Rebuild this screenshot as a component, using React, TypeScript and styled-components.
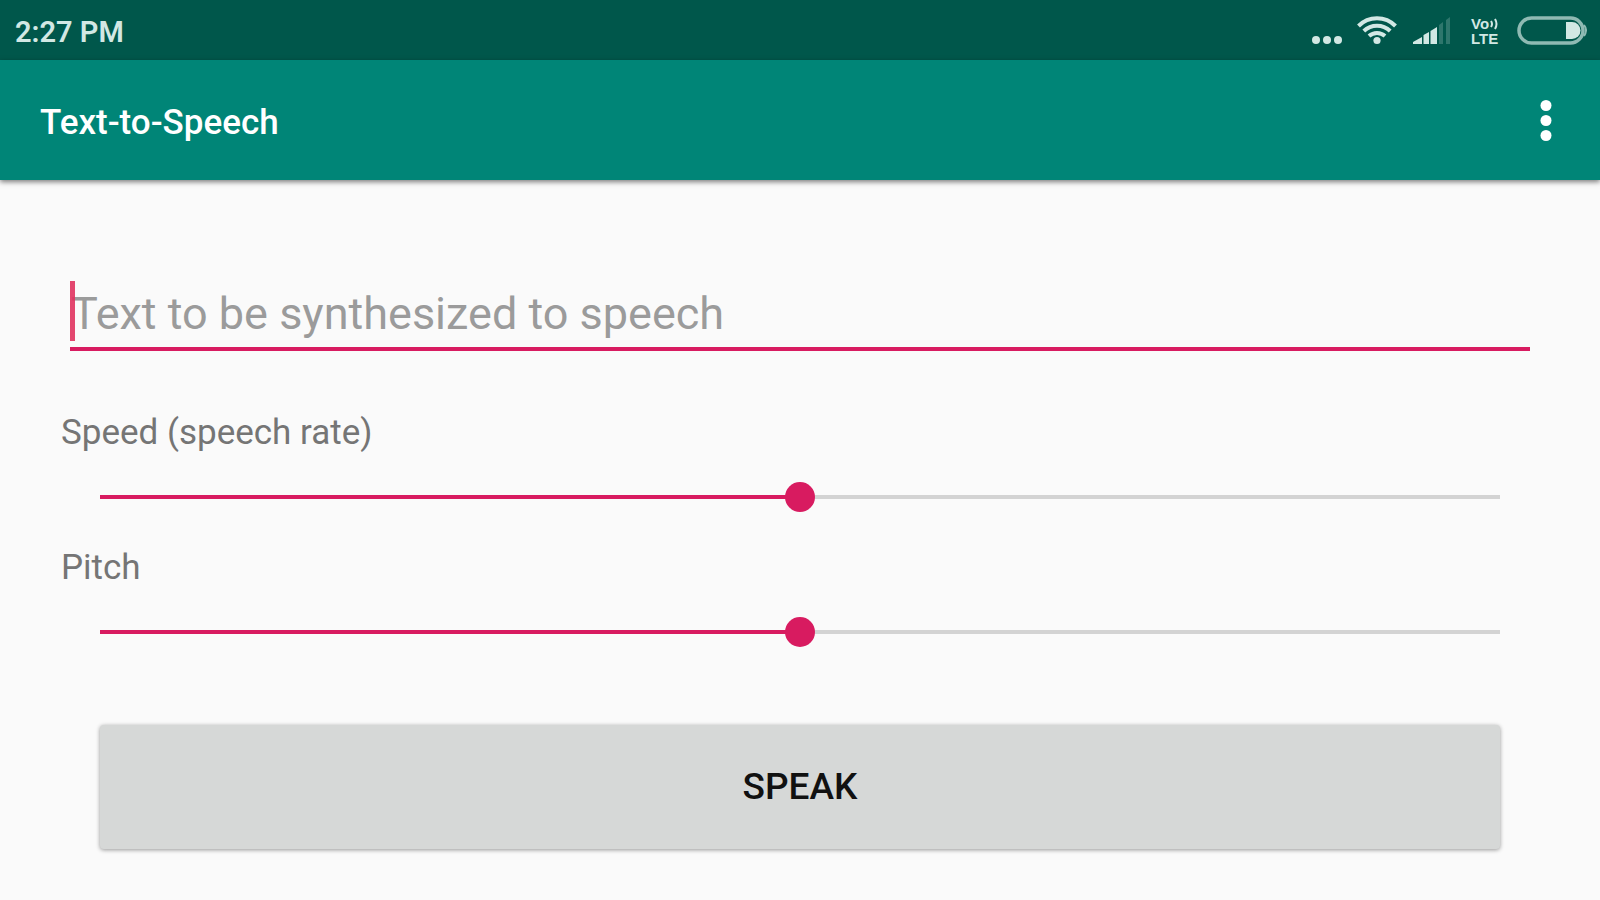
import React, { useId, useState } from "react";
import styled, { createGlobalStyle } from "styled-components";

const accent = "#d81b60";

const GlobalStyle = createGlobalStyle`
  *, *::before, *::after { box-sizing: border-box; }
  body {
    margin: 0;
    background: #fafafa;
    font-family: Roboto, "Liberation Sans", sans-serif;
  }
`;

const Screen = styled.div`
  display: flex;
  flex-direction: column;
  min-height: 100vh;
`;

const StatusBar = styled.div`
  display: flex;
  align-items: center;
  justify-content: space-between;
  height: 60px;
  padding: 0 13px 0 15px;
  background: #00574b;
  color: #d2e8e4;
`;

const Clock = styled.time`
  font-size: 29px;
  font-weight: 600;
  line-height: 36px;
  padding-top: 4px;
`;

const StatusIcons = styled.div`
  display: flex;
  align-items: center;
`;

const StatusIcon = styled.svg<{ $gap?: number }>`
  display: block;
  flex: none;
  margin-left: ${(p) => p.$gap ?? 0}px;
`;

const Volte = styled.div`
  width: 30px;
  margin: 0 16px 0 20px;
  padding-top: 2px;
  font-family: "Liberation Sans", sans-serif;
  font-size: 15px;
  font-weight: 700;
  line-height: 15px;
`;

const VolteRow = styled.div`
  display: flex;
  align-items: center;
`;

const AppBar = styled.header`
  display: flex;
  align-items: center;
  justify-content: space-between;
  height: 120px;
  padding: 0 30px 0 40px;
  background: #008577;
  box-shadow: 0 2px 5px rgba(0, 0, 0, 0.5);
`;

const Title = styled.h1`
  margin: 0;
  padding-top: 5px;
  color: #fff;
  font-size: 35px;
  font-weight: 500;
  line-height: 44px;
`;

const MenuButton = styled.button`
  display: grid;
  place-items: center;
  width: 48px;
  height: 64px;
  padding: 0;
  border: 0;
  background: none;
  color: #fff;
  cursor: pointer;
`;

const Form = styled.form`
  display: flex;
  flex-direction: column;
  padding: 96px 60px 50px;
`;

const TextField = styled.div`
  position: relative;
  margin: 0 10px;
  padding-bottom: 6px;
  border-bottom: 4px solid ${accent};
`;

const Caret = styled.span`
  position: absolute;
  left: 0;
  top: 5px;
  width: 5px;
  height: 60px;
  background: #e0335f;
  opacity: 0.9;
`;

const TextInput = styled.input`
  display: block;
  width: 100%;
  height: 65px;
  padding: 10px 0 0 1px;
  border: 0;
  outline: 0;
  background: transparent;
  color: #212121;
  caret-color: transparent;
  font: 400 45px/52px Roboto, "Liberation Sans", sans-serif;
  &::placeholder { color: #9b9b9b; opacity: 1; }
`;

const Field = styled.div`
  display: flex;
  flex-direction: column;
  height: 135px;
`;

const Fields = styled.div`
  padding: 60px 0 44px;
`;

const Label = styled.label`
  padding-left: 1px;
  color: #757575;
  font-size: 35px;
  line-height: 44px;
`;

const Slider = styled.input`
  appearance: none;
  height: 30px;
  margin: 27px 40px 0;
  background: transparent;
  cursor: pointer;
  &::-webkit-slider-runnable-track {
    height: 4px;
    background: linear-gradient(
      to right,
      ${accent} var(--fill),
      #d3d3d3 var(--fill)
    );
  }
  &::-webkit-slider-thumb {
    appearance: none;
    width: 30px;
    height: 30px;
    margin-top: -13px;
    border-radius: 50%;
    background: ${accent};
  }
`;

const SpeakButton = styled.button`
  height: 124px;
  margin: 0 40px;
  padding: 0;
  border: 0;
  border-radius: 4px;
  background: #d6d8d7;
  box-shadow: 0 1px 4px rgba(0, 0, 0, 0.4);
  color: #111;
  font: 500 37px/44px Roboto, "Liberation Sans", sans-serif;
  cursor: pointer;
`;

function SliderField({ label }: { label: string }) {
  const id = useId();
  const [value, setValue] = useState(50);
  return (
    <Field>
      <Label htmlFor={id}>{label}</Label>
      <Slider
        id={id}
        type="range"
        value={value}
        onChange={(e) => setValue(Number(e.target.value))}
        style={{ "--fill": `${value}%` } as React.CSSProperties}
      />
    </Field>
  );
}

function Status() {
  return (
    <StatusBar>
      <Clock>2:27 PM</Clock>
      <StatusIcons>
        <StatusIcon width="30" height="60" viewBox="0 0 30 60" fill="currentColor">
          <circle cx="4" cy="40" r="4" />
          <circle cx="15" cy="40" r="4" />
          <circle cx="26" cy="40" r="4" />
        </StatusIcon>
        <StatusIcon $gap={15} width="40" height="60" viewBox="0 0 40 60" fill="none" stroke="currentColor" strokeWidth="4">
          <path d="M1.500 26a26 26 0 0 1 37 0" />
          <path d="M6.800 31a19 19 0 0 1 26.400 0" />
          <path d="M12 36a12 12 0 0 1 16 0" />
          <circle cx="20" cy="40.500" r="3.600" fill="currentColor" stroke="none" />
        </StatusIcon>
        <StatusIcon $gap={16} width="38" height="60" viewBox="0 0 38 60" fill="currentColor">
          <path d="M0 44v-2l9-5v7zM10.500 44v-9l5.500-3v12zM17.500 44V31l6.500-4v17z" />
          <path d="M26 44V25l4-3v22zM33 44V20l4-3v27z" opacity="0.22" />
        </StatusIcon>
        <Volte>
          <VolteRow>
            Vo
            <StatusIcon $gap={1} width="8" height="12" viewBox="0 0 8 12" fill="none" stroke="currentColor" strokeWidth="2">
              <path d="M1 3q2 3 0 6M5 1q3 5 0 10" />
            </StatusIcon>
          </VolteRow>
          <VolteRow>LTE</VolteRow>
        </Volte>
        <StatusIcon width="70" height="60" viewBox="0 0 70 60" fill="none">
          <rect x="2" y="18" width="64" height="25" rx="12.500" stroke="#8fbab3" strokeWidth="3.500" />
          <path d="M49 22h6a8.500 8.500 0 0 1 0 17h-6z" fill="currentColor" />
          <path d="M67 25q4 5 0 11" stroke="#8fbab3" strokeWidth="2" />
        </StatusIcon>
      </StatusIcons>
    </StatusBar>
  );
}

export default function App() {
  const [text, setText] = useState("");
  return (
    <Screen>
      <GlobalStyle />
      <Status />
      <AppBar>
        <Title>Text-to-Speech</Title>
        <MenuButton type="button" aria-label="More options">
          <svg width="12" height="44" viewBox="0 0 12 44" fill="currentColor">
            <circle cx="6" cy="7.500" r="5.500" />
            <circle cx="6" cy="22.500" r="5.500" />
            <circle cx="6" cy="37.500" r="5.500" />
          </svg>
        </MenuButton>
      </AppBar>
      <Form onSubmit={(e) => e.preventDefault()}>
        <TextField>
          <TextInput
            aria-label="Text to be synthesized to speech"
            placeholder="Text to be synthesized to speech"
            value={text}
            onChange={(e) => setText(e.target.value)}
          />
          {text === "" && <Caret />}
        </TextField>
        <Fields>
          <SliderField label="Speed (speech rate)" />
          <SliderField label="Pitch" />
        </Fields>
        <SpeakButton type="submit">SPEAK</SpeakButton>
      </Form>
    </Screen>
  );
}
